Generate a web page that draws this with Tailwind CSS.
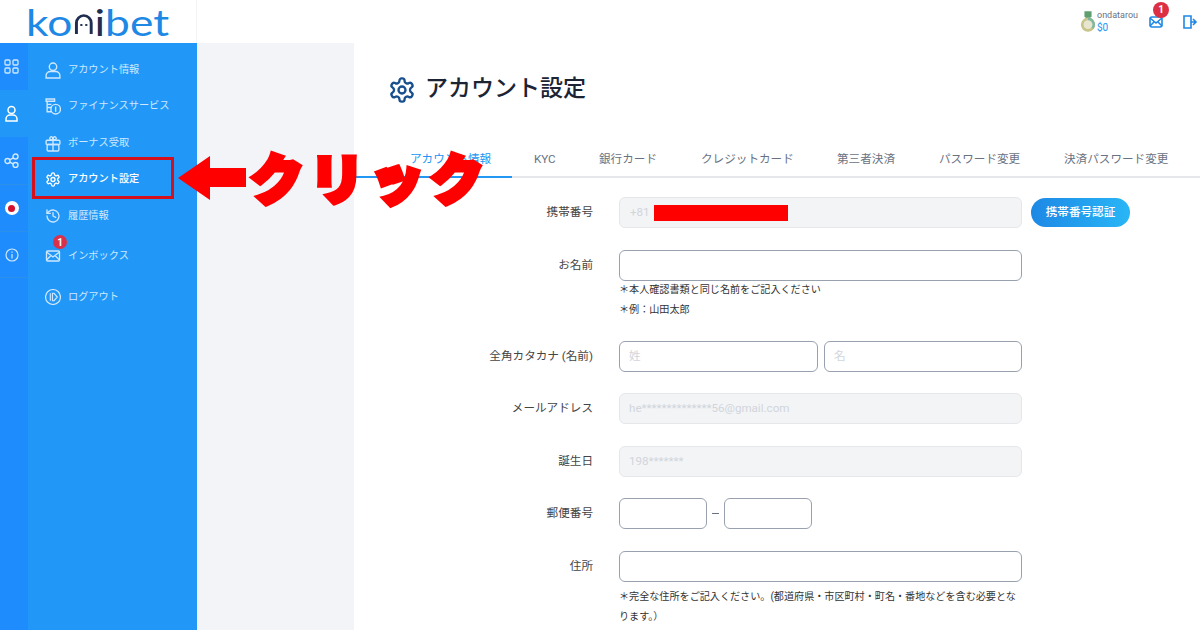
<!DOCTYPE html>
<html lang="ja">
<head>
  <meta charset="UTF-8" />
  <title>アカウント設定</title>
  <script src="https://cdn.jsdelivr.net/npm/@tailwindcss/browser@4"></script>
</head>
<body class="w-[1200px] h-[630px] overflow-hidden bg-white relative font-['Roboto','Noto_Sans_CJK_JP',sans-serif]">

  <!-- top bar -->
  <header class="h-[43px] flex items-center bg-white">
    <div class="w-[197px] h-full flex items-center pl-[26px] border-r border-gray-100">
      <div class="flex items-end origin-left scale-x-[1.23] text-[36px] leading-[40px] font-['Lato',sans-serif] font-normal text-[#1e88e5]">
        <span>ko</span>
        <svg class="w-[16px] h-[20px] mb-[8px] mx-[1px]" viewBox="0 0 16 20" fill="none"><path d="M2 20V9a6 7.500 0 0 1 12 0v11" stroke="#1f2d50" stroke-width="2.400"/><circle cx="6" cy="11" r="1.100" fill="#1f2d50"/><circle cx="10" cy="11" r="1.100" fill="#1f2d50"/></svg>
        <span class="text-[#1f2d50]">i</span><span>bet</span>
      </div>
    </div>
    <div class="ml-auto flex items-center">
      <svg class="w-[16px] h-[24px]" viewBox="0 0 18 24"><path d="M5 0h8v6l-4 3-4-3z" fill="#5f9e6e"/><circle cx="9" cy="15" r="8" fill="#c9c48a"/><path d="M9 15V7a8 8 0 0 1 6 13z" fill="#7fb89a"/><circle cx="9" cy="15" r="5" fill="#e8e6d0"/></svg>
      <div class="w-[41px] pl-[1px]">
        <div class="text-[9px] leading-[12px] text-gray-500">ondatarou</div>
        <div class="text-[10px] leading-[14px] text-[#2196f3]">$0</div>
      </div>
      <div class="relative w-[14px] h-[12px] mr-[19px] ml-[12px]">
        <svg class="w-[14px] h-[12px]" viewBox="0 0 14 12" fill="none" stroke="#1e88e5" stroke-width="1.600"><rect x="1" y="1" width="12" height="10" rx="2"/><path d="M1 2l6 5 6-5M1 10l4-4M13 10l-4-4"/></svg>
        <span class="absolute -top-[14px] left-[4px] w-4 h-4 rounded-full bg-[#dc2f44] text-white text-[10px] font-bold flex items-center justify-center">1</span>
      </div>
      <svg class="w-[16px] h-[16px] mr-[2px]" viewBox="0 0 16 16" fill="none" stroke="#1e88e5" stroke-width="1.600"><path d="M9 2H2v12h7V2zM9 4l0 8M11 5l3 3-3 3M9 8h5"/></svg>
    </div>
  </header>

  <div class="flex h-[587px]">
    <!-- icon rail -->
    <nav class="w-[28px] bg-[#2198f8] flex flex-col">
      <div class="h-[47px] bg-[#1e8cfd] flex items-center justify-center pr-[5px]">
        <svg class="w-[15px] h-[15px]" viewBox="0 0 15 15" fill="none" stroke="#cfe8ff" stroke-width="1.300"><rect x="1" y="1" width="5" height="5" rx="1"/><rect x="9" y="1" width="5" height="5" rx="1"/><rect x="1" y="9" width="5" height="5" rx="1"/><rect x="9" y="9" width="5" height="5" rx="1"/></svg>
      </div>
      <div class="h-[47px] flex items-center justify-center pr-[5px]">
        <svg class="w-[15px] h-[17px]" viewBox="0 0 15 17" fill="none" stroke="#fff" stroke-width="1.500"><circle cx="7.500" cy="5" r="3.500"/><path d="M2 16v-2a4 4 0 0 1 4-4h3a4 4 0 0 1 4 4v2z"/></svg>
      </div>
      <div class="h-[47px] bg-[#1e8cfd] flex items-center justify-center pr-[5px]">
        <svg class="w-[15px] h-[15px]" viewBox="0 0 15 15" fill="none" stroke="#cfe8ff" stroke-width="1.400"><circle cx="3.500" cy="8" r="2.500"/><circle cx="11.500" cy="3.500" r="2.500"/><circle cx="11.500" cy="12" r="2.500"/><path d="M5.700 6.800l3.600-2M5.700 9.200l3.600 1.800"/></svg>
      </div>
      <div class="h-[47px] bg-[#1e8cfd] border-t border-[#2c8fe8] flex items-center justify-center pr-[5px]">
        <span class="w-[14px] h-[14px] rounded-full bg-white flex items-center justify-center"><span class="w-[7px] h-[7px] rounded-full bg-[#d3122f]"></span></span>
      </div>
      <div class="h-[47px] bg-[#1e8cfd] border-y border-[#2c8fe8] flex items-center justify-center pr-[5px]">
        <svg class="w-[14px] h-[14px]" viewBox="0 0 14 14" fill="none" stroke="#cfe8ff" stroke-width="1.200"><circle cx="7" cy="7" r="6"/><path d="M7 6v4.500M7 3.500v1.200"/></svg>
      </div>
      <div class="flex-1 bg-[#1e8cfd]"></div>
    </nav>

    <!-- menu -->
    <nav class="w-[169px] bg-[#2198f8] pl-[17px] pt-[9px] text-[10.2px] text-[#cfe8ff]">
      <div class="h-[36px] flex items-center gap-[7px]">
        <svg class="w-[16px] h-[17px]" viewBox="0 0 15 16" fill="none" stroke="#cfe8ff" stroke-width="1.300"><circle cx="7.500" cy="4.500" r="3.500"/><path d="M1 15v-2a4 4 0 0 1 4-4h5a4 4 0 0 1 4 4v2z"/></svg>
        <span>アカウント情報</span>
      </div>
      <div class="h-[36px] flex items-center gap-[7px]">
        <svg class="w-[16px] h-[17px]" viewBox="0 0 15 16" fill="none" stroke="#cfe8ff" stroke-width="1.300"><path d="M1 1h8v2H1zM2 3v10h4M2 6h4M2 9h4"/><circle cx="10" cy="10.500" r="4.500"/><path d="M10 8v5"/></svg>
        <span>ファイナンスサービス</span>
      </div>
      <div class="h-[38px] flex items-center gap-[7px]">
        <svg class="w-[16px] h-[17px]" viewBox="0 0 15 16" fill="none" stroke="#cfe8ff" stroke-width="1.300"><rect x="1" y="5" width="13" height="4" rx="1"/><rect x="2" y="9" width="11" height="6" rx="1"/><path d="M7.500 5v10M7.500 5C5 5 3.500 3.500 5 2s2.500 1 2.500 3c0-2 1-4.500 2.500-3s0 3-2.500 3z"/></svg>
        <span>ボーナス受取</span>
      </div>
      <div class="h-[34px] flex items-center gap-[7px] text-white font-medium">
        <svg class="w-[16px] h-[17px]" viewBox="0 0 24 24" fill="none" stroke="#fff" stroke-width="2" stroke-linecap="round" stroke-linejoin="round"><path d="M12.220 2h-.44a2 2 0 0 0-2 2v.18a2 2 0 0 1-1 1.730l-.43.25a2 2 0 0 1-2 0l-.15-.08a2 2 0 0 0-2.730.73l-.22.38a2 2 0 0 0 .73 2.730l.15.1a2 2 0 0 1 1 1.720v.51a2 2 0 0 1-1 1.740l-.15.09a2 2 0 0 0-.73 2.730l.22.38a2 2 0 0 0 2.730.73l.15-.08a2 2 0 0 1 2 0l.43.25a2 2 0 0 1 1 1.730V20a2 2 0 0 0 2 2h.44a2 2 0 0 0 2-2v-.18a2 2 0 0 1 1-1.730l.43-.25a2 2 0 0 1 2 0l.15.08a2 2 0 0 0 2.730-.73l.22-.39a2 2 0 0 0-.73-2.730l-.15-.08a2 2 0 0 1-1-1.740v-.5a2 2 0 0 1 1-1.740l.15-.09a2 2 0 0 0 .73-2.730l-.22-.38a2 2 0 0 0-2.730-.73l-.15.08a2 2 0 0 1-2 0l-.43-.25a2 2 0 0 1-1-1.730V4a2 2 0 0 0-2-2z"/><circle cx="12" cy="12" r="3"/></svg>
        <span>アカウント設定</span>
      </div>
      <div class="h-[40px] flex items-center gap-[7px]">
        <svg class="w-[16px] h-[16px]" viewBox="0 0 24 24" fill="none" stroke="#cfe8ff" stroke-width="2" stroke-linecap="round" stroke-linejoin="round"><path d="M3 12a9 9 0 1 0 3-6.700L3 8"/><path d="M3 3v5h5M12 7v5l4 2"/></svg>
        <span>履歴情報</span>
      </div>
      <div class="h-[40px] flex items-center gap-[7px] relative">
        <svg class="w-[16px] h-[12px]" viewBox="0 0 15 12" fill="none" stroke="#cfe8ff" stroke-width="1.300"><rect x="1" y="1" width="13" height="10" rx="1"/><path d="M1 2l6.500 5L14 2M1 10l4.500-4.500M14 10L9.500 5.500"/></svg>
        <span>インボックス</span>
        <span class="absolute -top-[1px] left-[8px] w-[14px] h-[14px] rounded-full bg-[#d9314a] text-white text-[10px] font-bold flex items-center justify-center">1</span>
      </div>
      <div class="h-[42px] flex items-center gap-[7px]">
        <svg class="w-[16px] h-[16px]" viewBox="0 0 15 15" fill="none" stroke="#cfe8ff" stroke-width="1.100"><circle cx="7.500" cy="7.500" r="7"/><path d="M5 4v7M7 4h1.500L11.500 7.500 8.500 11H7z"/></svg>
        <span>ログアウト</span>
      </div>
    </nav>

    <div class="w-[157px] bg-[#f3f4f8]"></div>

    <!-- main -->
    <main class="flex-1 min-w-0">
      <div class="h-[91px] pl-[34px] pt-[2px] flex items-center gap-[9px]">
        <svg class="w-[28px] h-[28px]" viewBox="0 0 24 24" fill="none" stroke="#174f8f" stroke-width="2" stroke-linecap="round" stroke-linejoin="round"><path d="M12.220 2h-.44a2 2 0 0 0-2 2v.18a2 2 0 0 1-1 1.730l-.43.25a2 2 0 0 1-2 0l-.15-.08a2 2 0 0 0-2.730.73l-.22.38a2 2 0 0 0 .73 2.730l.15.1a2 2 0 0 1 1 1.720v.51a2 2 0 0 1-1 1.740l-.15.09a2 2 0 0 0-.73 2.730l.22.38a2 2 0 0 0 2.730.73l.15-.08a2 2 0 0 1 2 0l.43.25a2 2 0 0 1 1 1.730V20a2 2 0 0 0 2 2h.44a2 2 0 0 0 2-2v-.18a2 2 0 0 1 1-1.730l.43-.25a2 2 0 0 1 2 0l.15.08a2 2 0 0 0 2.730-.73l.22-.39a2 2 0 0 0-.73-2.730l-.15-.08a2 2 0 0 1-1-1.740v-.5a2 2 0 0 1 1-1.740l.15-.09a2 2 0 0 0 .73-2.730l-.22-.38a2 2 0 0 0-2.730-.73l-.15.08a2 2 0 0 1-2 0l-.43-.25a2 2 0 0 1-1-1.730V4a2 2 0 0 0-2-2z"/><circle cx="12" cy="12" r="3"/></svg>
        <h1 class="text-[23px] font-medium text-[#1c2434]">アカウント設定</h1>
      </div>

      <div class="h-[44px] border-b-2 border-gray-200 flex items-end text-[11.6px] leading-[18px] text-gray-500">
        <div class="w-[158px] -mb-[2px] border-b-2 border-[#2196f3] text-[#2196f3] pl-[56px] pb-[8px]">アカウント情報</div>
        <span class="ml-[22px] w-[65px] pb-[8px]">KYC</span>
        <span class="w-[102px] pb-[8px]">銀行カード</span>
        <span class="w-[136px] pb-[8px]">クレジットカード</span>
        <span class="w-[102px] pb-[8px]">第三者決済</span>
        <span class="w-[125px] pb-[8px]">パスワード変更</span>
        <span class="pb-[8px]">決済パスワード変更</span>
      </div>

      <form class="pl-[107px] pt-[19px] text-[11.6px] text-[#444]">
        <div class="flex items-center h-[31px] mb-[22px]">
          <label class="w-[132px] text-right">携帯番号</label>
          <div class="relative ml-[26px] w-[403px] h-[31px] rounded-[6px] border border-gray-200 bg-[#f3f4f6] px-[10px] flex items-center text-gray-300">
            +81
            <span class="absolute left-[34px] top-[7px] w-[134px] h-[16px] bg-[#ff0000]"></span>
          </div>
          <button type="button" class="ml-[9px] h-[29px] w-[99px] rounded-full bg-gradient-to-r from-[#1e88e5] to-[#29b6f6] text-white font-medium">携帯番号認証</button>
        </div>

        <div class="flex items-center h-[31px]">
          <label class="w-[132px] text-right">お名前</label>
          <div class="ml-[26px] w-[403px] h-[31px] rounded-[6px] border border-gray-400 bg-white"></div>
        </div>
        <div class="ml-[158px] -mt-[1px] mb-[21px] text-[10.1px] leading-[20px] text-[#333]">
          <p>＊本人確認書類と同じ名前をご記入ください</p>
          <p>＊例：山田太郎</p>
        </div>

        <div class="flex items-center h-[31px] mb-[21px]">
          <label class="w-[132px] text-right">全角カタカナ (名前)</label>
          <div class="ml-[26px] w-[199px] h-[31px] rounded-[6px] border border-gray-400 px-[9px] flex items-center text-gray-300">姓</div>
          <div class="ml-[6px] w-[198px] h-[31px] rounded-[6px] border border-gray-400 px-[9px] flex items-center text-gray-300">名</div>
        </div>

        <div class="flex items-center h-[31px] mb-[22px]">
          <label class="w-[132px] text-right">メールアドレス</label>
          <div class="ml-[26px] w-[403px] h-[31px] rounded-[6px] border border-gray-200 bg-[#f3f4f6] px-[9px] flex items-center text-gray-300">he**************56@gmail.com</div>
        </div>

        <div class="flex items-center h-[31px] mb-[21px]">
          <label class="w-[132px] text-right">誕生日</label>
          <div class="ml-[26px] w-[403px] h-[31px] rounded-[6px] border border-gray-200 bg-[#f3f4f6] px-[9px] flex items-center text-gray-300">198*******</div>
        </div>

        <div class="flex items-center h-[31px] mb-[22px]">
          <label class="w-[132px] text-right">郵便番号</label>
          <div class="ml-[26px] w-[88px] h-[31px] rounded-[6px] border border-gray-400"></div>
          <span class="w-[17px] h-px flex justify-center"><span class="block w-[7px] h-px bg-gray-500"></span></span>
          <div class="w-[88px] h-[31px] rounded-[6px] border border-gray-400"></div>
        </div>

        <div class="flex items-center h-[31px]">
          <label class="w-[132px] text-right">住所</label>
          <div class="ml-[26px] w-[403px] h-[31px] rounded-[6px] border border-gray-400"></div>
        </div>
        <p class="ml-[158px] mt-[5px] text-[10.1px] leading-[20px] text-[#333]">＊完全な住所をご記入ください。(都道府県・市区町村・町名・番地などを含む必要とな<br />ります。）</p>
      </form>
    </main>
  </div>

  <!-- annotation over the page -->
  <div class="absolute left-[32px] top-[157px] w-[142px] h-[42px] border-[3px] border-[#d60f1c]"></div>
  <svg class="absolute left-[178px] top-[156px] w-[68px] h-[44px]" viewBox="0 0 68 44"><path d="M0 22L32 0v12h36v19H32v13z" fill="#ff0000"/></svg>
  <div class="absolute left-[250px] top-[139px] text-[54px] leading-[76px] tracking-[6px] font-black text-[#ff0000] whitespace-nowrap font-['Noto_Sans_CJK_JP',sans-serif] [-webkit-text-stroke:5px_#ff0000]">クリック</div>
</body>
</html>
